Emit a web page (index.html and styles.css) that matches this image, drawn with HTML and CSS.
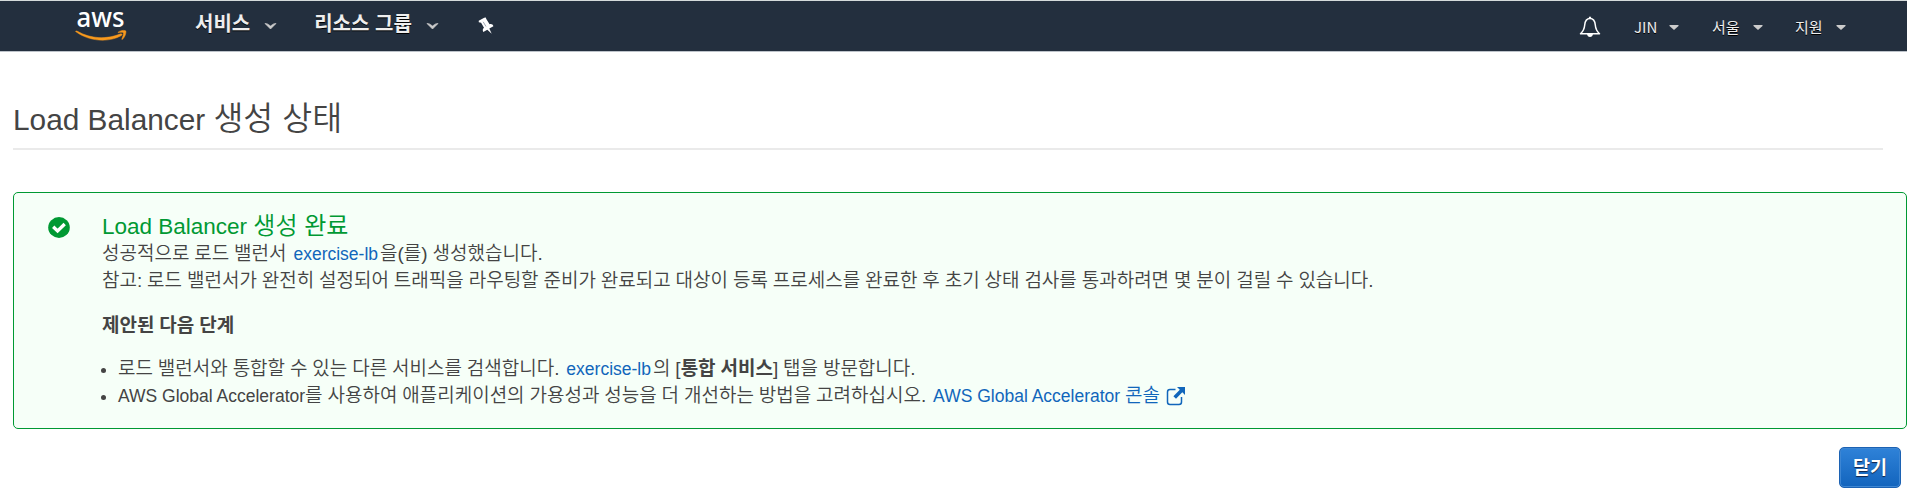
FILE: index.html
```html
<!DOCTYPE html>
<html lang="ko">
<head>
<meta charset="utf-8">
<title>Load Balancer 생성 상태</title>
<link rel="stylesheet" href="styles.css">
</head>
<body>
<header class="nav">
  <svg class="logo" width="52" height="40" viewBox="0 -8 52 40">
    <text class="logo-text" x="1.5" y="16.500" textLength="48" lengthAdjust="spacingAndGlyphs">aws</text>
    <path d="M1 20.500C14 30 33 31.500 46 24.500C48 23.500 47 22 45 22.800C32 28 16 28 2 19.800C1 19.300 0 20 1 20.500Z" transform="translate(0 1.300)" fill="#f8991d" stroke="#f8991d" stroke-width=".5"/>
    <path d="M43.200 20.800C46 18.500 51 18.800 51 20C51 22.500 49.800 26 47.500 28C47 28.400 46.600 28.200 46.900 27.500C47.800 25.300 49 22.400 48.300 21.500C47.500 20.700 45 21.100 43.700 21.300C42.900 21.400 42.800 21.100 43.200 20.800Z" transform="translate(0 1.300)" fill="#f8991d" stroke="#f8991d" stroke-width=".5"/>
  </svg>
  <div class="menu services"><span>서비스</span><svg width="13" height="8" viewBox="0 0 13 8"><path d="M1 1.500Q3 1 6.500 4Q10 1 12 1.500L6.500 7Z" fill="#ccc" stroke="#ccc" stroke-width=".7"/></svg></div>
  <div class="menu groups"><span>리소스 그룹</span><svg width="13" height="8" viewBox="0 0 13 8"><path d="M1 1.500Q3 1 6.500 4Q10 1 12 1.500L6.500 7Z" fill="#ccc" stroke="#ccc" stroke-width=".7"/></svg></div>
  <svg class="pin" width="16" height="18" viewBox="0 0 16 18"><path d="M6.200 .8L7.800 .5L8.300 2L11.600 7.200C13.400 6.600 14.900 7.400 15.400 9.300L11.300 11.600L13.700 16.800L9.300 12.700L5.300 15C4.300 13.300 4.800 11.600 6 10.700L3.100 5.700L.8 5.300L.7 3.800Z" fill="#fff"/><path d="M5.200 4.800L8 9.500" stroke="#8790a0" stroke-width=".8"/></svg>
  <svg class="bell" width="22" height="22" viewBox="0 0 22 22"><path d="M11 2.500C7 2.500 6 5.700 5.700 9C5.400 13 4.500 15 1.500 17.800H20.500C17.500 15 16.600 13 16.300 9C16 5.700 15 2.500 11 2.500Z" fill="none" stroke="#fff" stroke-width="1.500" stroke-linejoin="round"/><path d="M9.900 .7H12.100V3H9.900ZM8 18H14Q13.500 21 11 21T8 18Z" fill="#fff"/></svg>
  <div class="menu small user"><span>JIN</span><svg width="10" height="7" viewBox="0 0 10 7"><path d="M.5 1H9.500V2L5 6L.5 2Z" fill="#ccc"/></svg></div>
  <div class="menu small region"><span>서울</span><svg width="10" height="7" viewBox="0 0 10 7"><path d="M.5 1H9.500V2L5 6L.5 2Z" fill="#ccc"/></svg></div>
  <div class="menu small support"><span>지원</span><svg width="10" height="7" viewBox="0 0 10 7"><path d="M.5 1H9.500V2L5 6L.5 2Z" fill="#ccc"/></svg></div>
</header>
<main class="page">
  <h1 class="title">Load Balancer <span class="ko-title">생성 상태</span></h1>
  <section class="notice">
    <svg class="check" width="22" height="21" viewBox="0 0 22 21"><ellipse cx="11" cy="10.500" rx="10.800" ry="10.400" fill="#093"/><path d="M5.200 9.700L9.600 14L16.700 7" fill="none" stroke="#fff" stroke-width="3.300"/></svg>
    <div class="content">
      <h2 class="subtitle">Load Balancer <span class="ko-sub">생성 <span class="medium">완료</span></span></h2>
      <p class="line"><span class="ko">성공적으로 로드 밸런서 </span><a class="link name">exercise-lb</a><span class="ko">을(를) 생성했습니다.</span></p>
      <p class="line"><span class="ko">참고: 로드 밸런서가 완전히 설정되어 트래픽을 라우팅할 준비가 완료되고 대상이 등록 프로세스를 완료한 후 초기 상태 검사를 통과하려면 몇 분이 걸릴 수 있습니다.</span></p>
      <h3 class="steps"><span class="ko bold">제안된 다음 단계</span></h3>
      <ul class="list">
        <li class="line"><span class="ko">로드 밸런서와 통합할 수 있는 다른 서비스를 검색합니다. </span><a class="link name">exercise-lb</a><span class="ko">의 [<b class="bold">통합 서비스</b>] 탭을 방문합니다.</span></li>
        <li class="line">AWS Global Accelerator<span class="ko">를 사용하여 애플리케이션의 가용성과 성능을 더 개선하는 방법을 고려하십시오. </span><a class="link console">AWS Global Accelerator <span class="ko">콘솔</span><svg class="ext" width="20" height="20" viewBox="0 0 20 20"><path d="M9.500 3.500H4Q1.500 3.500 1.500 6V16Q1.500 18.500 4 18.500H13Q15.500 18.500 15.500 16V11" fill="none" stroke="#1166bb" stroke-width="1.500"/><path d="M11 1H19V9L16.300 6.300L10 12.800L7.400 10.300L13.800 3.800Z" fill="#1166bb"/></svg></a></li>
      </ul>
    </div>
  </section>
  <div class="actions"><button class="close">닫기</button></div>
</main>
</body>
</html>
```
FILE: styles.css
```css
* { box-sizing: border-box; }
body { margin: 0; height: 493px; overflow: hidden; background: #fff; color: #444; font: 17.5px "Liberation Sans", "Noto Sans CJK KR", sans-serif; }
h1, h2, h3, p, ul { margin: 0; padding: 0; font-weight: 400; }
.nav { height: 52px; display: flex; align-items: flex-start; background: #232f3e; border-top: 1px solid #d5dbdb; border-bottom: 1px solid #bdc3ca; }
.logo { margin: 1px 0 0 75px; flex: none; overflow: visible; }
.logo-text { font: 500 27px "Noto Sans", sans-serif; fill: #fff; }
.menu { display: flex; align-items: center; color: #eee; font: 700 20px/26px "Noto Sans CJK KR", sans-serif; text-shadow: 0 1px 0 #000; white-space: nowrap; }
.menu svg { margin-top: 6px; }
.services { margin: 9px 0 0 68px; gap: 14px; }
.groups { margin: 9px 0 0 37px; gap: 14px; }
.pin { margin: 16px 0 0 39px; }
.bell { margin: 15px 0 0 auto; }
.small { margin-top: 13px; font: 400 15px/26px "Noto Sans CJK KR", sans-serif; gap: 11px; }
.small svg { margin-top: 1px; }
.user { margin-left: 33px; }
.region { margin-left: 33px; }
.support { margin-left: 32px; margin-right: 61px; }
.user span { width: 24px; }
.region span, .support span { width: 30px; }
.page { padding: 47px 0 0 12px; }
.title { height: 51px; margin-left: 1px; margin-right: 24px; border-bottom: 2px solid #eaeaea; font-size: 29.8px; line-height: 40px; white-space: nowrap; }
.ko-title { font-size: 32.500px; font-weight: 350; }
.notice { display: flex; height: 237px; margin: 42px 0 0 1px; padding: 18px 0 0 34px; border: 1px solid #093; border-radius: 5px; background: #f6fff8; }
.check { margin-top: 6px; flex: none; }
.content { margin-left: 32px; white-space: nowrap; }
.subtitle { color: #093; font-size: 22.5px; line-height: 29px; height: 30px; }
.ko-sub { font-size: 24px; font-weight: 350; }
.medium { font-weight: 400; }
.line { height: 26.500px; line-height: 26.500px; white-space: pre; }
.ko { font-size: 19px; font-weight: 350; word-spacing: -.4px; }
.link { color: #16b; }
.name { margin: 0 2px; }
.console { margin-left: 2px; }
.bold { font-weight: 700; }
.steps { margin-top: 18px; height: 26px; line-height: 26px; }
.list { margin-top: 18px; padding-left: 16px; }
.ext { margin-left: 6px; vertical-align: -4px; }
.actions { display: flex; justify-content: flex-end; padding: 18px 6px 0 0; }
.close { width: 62px; height: 41px; padding: 0 0 4px; border: 1px solid #1c62b3; border-radius: 5px; background: linear-gradient(#2f82d8, #1264bd); box-shadow: inset 0 0 0 1px #3d86d3; color: #fff; font: 700 18.500px "Noto Sans CJK KR", sans-serif; text-shadow: 0 1px 1px #124; }
```
